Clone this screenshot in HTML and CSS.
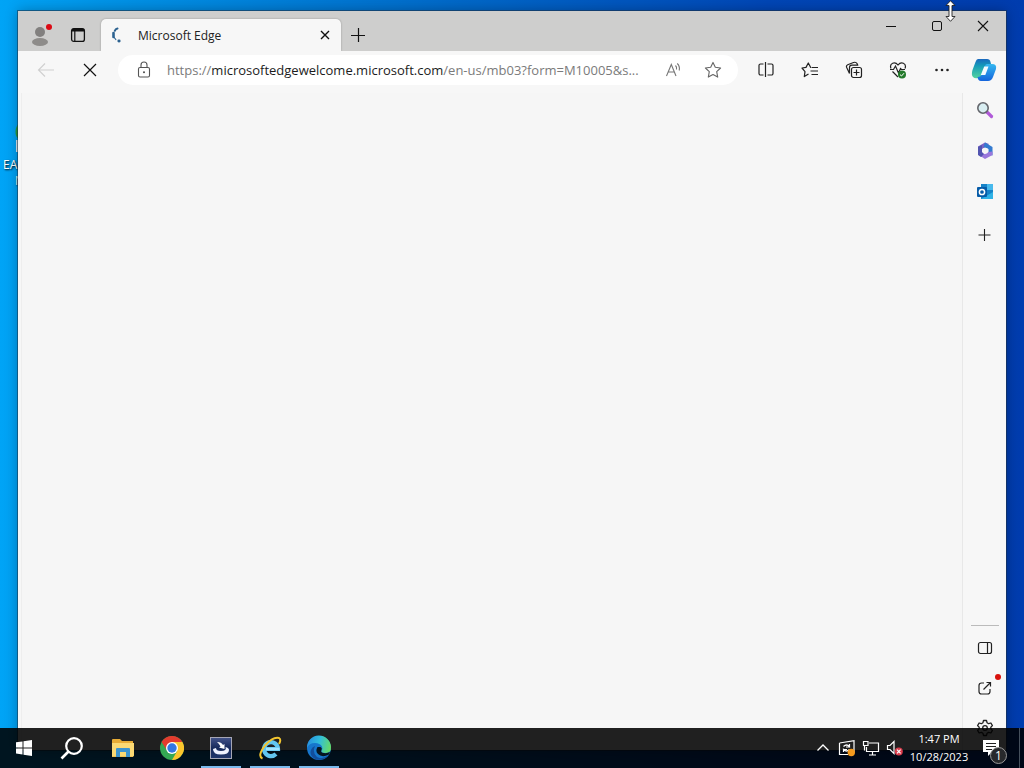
FILE: index.html
```html
<!DOCTYPE html>
<html lang="en">
<head>
<meta charset="utf-8">
<title>Desktop</title>
<link rel="stylesheet" href="styles.css">
</head>
<body>
<div class="desktop">
  <div class="shortcut">
    <svg width="24" height="36" viewBox="0 0 24 36"><path d="M10 3C3 6 3 18 8 20h10V3z" fill="#2a9d3c"/><path d="M5 21h14v12H5z" fill="#d8e6ee"/></svg>
    <span>EA</span>
    <span class="shortcut-second">N</span>
  </div>

  <main class="window">
    <header class="titlebar">
      <button class="title-btn profile" aria-label="Profile">
        <svg width="24" height="24" viewBox="0 0 24 24"><circle cx="11" cy="9" r="5" fill="#82807f"/><ellipse cx="11" cy="19" rx="8" ry="4" fill="#8e8c8a"/><circle cx="20" cy="4" r="3" fill="#dc0a14"/></svg>
      </button>
      <button class="title-btn" aria-label="Tab actions">
        <svg width="16" height="16" viewBox="0 0 16 16" fill="none" stroke="#111"><rect x="1.600" y="1.600" width="12.800" height="12.800" rx="2.200" stroke-width="1.300"/><path d="M2 3.200h12" stroke-width="2.600"/><path d="M4.800 3v11" stroke-width="1.200"/></svg>
      </button>
      <div class="tab">
        <svg class="tab-icon" width="16" height="16" viewBox="0 0 16 16" fill="none" stroke="#2c6290" stroke-linecap="round"><path d="M8.500 1.500Q6.500 2 5.800 3.800" stroke-width="2"/><path d="M4.500 6v4" stroke-width="2.600"/><path d="M5.200 10.500l1.600 2" stroke-width="1.200"/><path d="M9.800 14h.4" stroke-width="2.800"/></svg>
        <span class="tab-title">Microsoft Edge</span>
        <button class="tab-close" aria-label="Close tab">
          <svg width="10" height="10" viewBox="0 0 10 10" stroke="#111" stroke-width="1.400"><path d="M1 1l8 8M9 1l-8 8"/></svg>
        </button>
      </div>
      <button class="new-tab" aria-label="New tab">
        <svg width="16" height="16" viewBox="0 0 16 16" stroke="#111" stroke-width="1.200"><path d="M8.500 1v14M1 8.500h14"/></svg>
      </button>
      <div class="window-controls">
        <button aria-label="Minimize"><svg width="12" height="12" viewBox="0 0 12 12" stroke="#111"><path d="M1 6.500h10"/></svg></button>
        <button aria-label="Maximize"><svg width="12" height="12" viewBox="0 0 12 12" fill="none" stroke="#111"><rect x="1.500" y="1.500" width="9" height="9" rx="1.500"/></svg></button>
        <button aria-label="Close"><svg width="12" height="12" viewBox="0 0 12 12" stroke="#111" stroke-width="1.100"><path d="M1 1l10 10M11 1L1 11"/></svg></button>
      </div>
    </header>

    <nav class="toolbar">
      <button class="tool" aria-label="Back" disabled>
        <svg width="18" height="18" viewBox="0 0 18 18" fill="none" stroke="#cfcfcf" stroke-width="1.100"><path d="M17 9H1.500M8 2.500L1.500 9 8 15.500"/></svg>
      </button>
      <button class="tool" aria-label="Stop loading">
        <svg width="14" height="14" viewBox="0 0 14 14" stroke="#111" stroke-width="1.200"><path d="M1 1l12 12M13 1L1 13"/></svg>
      </button>
      <div class="address">
        <button class="address-btn" aria-label="Site information">
          <svg width="16" height="18" viewBox="0 0 16 18" fill="none" stroke="#555" stroke-width="1.100"><rect x="2.500" y="6.500" width="11" height="9.500" rx="1.500"/><path d="M5 6.500V4a3 3 0 0 1 6 0v2.500"/><circle cx="8" cy="11.300" r=".5" fill="#555"/></svg>
        </button>
        <label class="url">
          <input class="url-input" type="text" aria-label="Address and search bar">
          <span class="url-text">https://<b>microsoftedgewelcome.microsoft.com</b>/en-us/mb03?form=M10005&amp;s...</span>
        </label>
        <button class="address-btn" aria-label="Read aloud">
          <svg width="18" height="18" viewBox="0 0 18 18" fill="none" stroke="#777" stroke-width="1.100"><path d="M2.500 15L7.300 3.500 12 15M4.200 11h6.200M11.500 4.500q1.500 1.600 1 4M13.200 2.500q3 2.800 2 7"/></svg>
        </button>
        <button class="address-btn" aria-label="Add to favorites">
          <svg width="18" height="18" viewBox="0 0 18 18" fill="none" stroke="#666" stroke-width="1.100" stroke-linejoin="round"><path d="M9 1.400l2.300 4.900 5.300.7-3.900 3.700 1 5.400L9 13.500l-4.700 2.600 1-5.400L1.400 7l5.300-.7z"/></svg>
        </button>
      </div>
      <div class="tools">
        <button class="tool" aria-label="Split screen">
          <svg width="18" height="18" viewBox="0 0 18 18" fill="none" stroke="#222" stroke-width="1.200"><path d="M6.500 3h-3a1.500 1.500 0 0 0-1.500 1.500v8a1.500 1.500 0 0 0 1.500 1.500h3M10.500 3h4a1.500 1.500 0 0 1 1.500 1.500v8a1.500 1.500 0 0 1-1.500 1.500h-4M8.500 1v15"/></svg>
        </button>
        <button class="tool" aria-label="Favorites">
          <svg width="18" height="18" viewBox="0 0 18 18" fill="none" stroke="#222" stroke-width="1.200" stroke-linejoin="round"><path d="M10.500 6.500H9.700L7.300 2 5 6.400l-4 .6 3 3.600-.7 5L7.500 13M11 6.500h6M9.500 10h7.500M10.500 13.500h6.500"/></svg>
        </button>
        <button class="tool" aria-label="Collections">
          <svg width="18" height="18" viewBox="0 0 18 18" fill="none" stroke="#222" stroke-width="1.200"><rect x="6.500" y="6.500" width="10" height="10" rx="2"/><path d="M11.500 8.500v6M8.500 11.500h6M4.500 12.500L1.700 6.500q-.8-2 1-2.800L8.500 1.500Q11 .7 12 2.500l.8 1.500M4.500 12.500V6.500q0-2.300 2.300-2.300h6.500"/></svg>
        </button>
        <button class="tool" aria-label="Browser essentials">
          <svg width="18" height="18" viewBox="0 0 18 18" fill="none" stroke="#222" stroke-width="1.200"><path d="M2 7.500C0 2 6 0 9 4c3-4 9-2 7 3.500M3.500 10.500L9 16M1 8.500h3.500L6.500 5l3 7 2-4.500 1 1H16"/><circle cx="13" cy="13.500" r="4" fill="#237a2b" stroke="none"/><path d="M11 13.600l1.500 1.400 2.500-2.800" stroke="#fff" stroke-width="1"/></svg>
        </button>
        <button class="tool" aria-label="Settings and more">
          <svg width="16" height="16" viewBox="0 0 16 16" fill="#222"><circle cx="2.500" cy="8" r="1.300"/><circle cx="8" cy="8" r="1.300"/><circle cx="13.500" cy="8" r="1.300"/></svg>
        </button>
      </div>
      <button class="tool copilot" aria-label="Copilot">
        <svg width="26" height="26" viewBox="0 0 26 26"><defs><linearGradient id="cp1" x1="0" y1="0" x2="0" y2="1"><stop offset="0" stop-color="#1a68be"/><stop offset=".35" stop-color="#159bb8"/><stop offset="1" stop-color="#55d4a0"/></linearGradient><linearGradient id="cp2" x1="0" y1="0" x2="0" y2="1"><stop offset="0" stop-color="#35b8f0"/><stop offset="1" stop-color="#1464dc"/></linearGradient></defs><path d="M7 2h9q3 0 3.500 3l.5 2q-4 0-5.500 3.500L11 18q-1 3-4 3-3 1-5-1Q0 18 1.500 13L4.500 5Q5.500 2 7 2z" fill="url(#cp1)"/><path d="M16 7h5q5 0 4 5l-3 8q-1.500 4-5 4H10q-3 0-3.500-4 3.500 0 4.500-3l3-8q.5-2 2-2z" fill="url(#cp2)"/><path d="M13.200 9.500h4.300l-3.200 8.500H9.800z" fill="#f4fbff"/></svg>
      </button>
    </nav>

    <div class="content">
      <section class="page" aria-label="Page content"></section>
      <aside class="sidebar">
        <button class="side-btn" aria-label="Search">
          <svg width="18" height="18" viewBox="0 0 18 18"><path d="M11 11l4.500 4.500" stroke="#b05ad8" stroke-width="3.200" stroke-linecap="round"/><circle cx="7" cy="7" r="5.200" fill="#d9eef2" stroke="#64666c" stroke-width="1.600"/></svg>
        </button>
        <button class="side-btn" aria-label="Microsoft 365">
          <svg width="18" height="18" viewBox="0 0 18 18"><path d="M9 .5L2 4.500v8L6 15l2-3-2-2V7l4-2 3-3z" fill="#7b62c6"/><path d="M9 .5L16.500 5v8.500l-4-1V7L7.500 5z" fill="#347bd0"/><path d="M2 12.500l7 4.500 7.500-4v-3.500L12 10l-3 2-4-1z" fill="#9a78dc"/><path d="M2 5l4-2v7l2 2-3 3-3-2z" fill="#5355b0"/><circle cx="9.200" cy="8.700" r="3" fill="#f7f7f7"/></svg>
        </button>
        <button class="side-btn" aria-label="Outlook">
          <svg width="18" height="18" viewBox="0 0 18 18"><path d="M5 1h12v15H5z" fill="#1683c8"/><path d="M11 1h6v6h-6z" fill="#48b9ec"/><path d="M5 16l12-7v7z" fill="#2fb2e6"/><rect x="1" y="4" width="10" height="10" rx="1" fill="#075ca8"/><circle cx="6" cy="9" r="2.600" fill="none" stroke="#fff" stroke-width="1.500"/></svg>
        </button>
        <button class="side-btn side-add" aria-label="Customize">
          <svg width="14" height="14" viewBox="0 0 14 14" stroke="#222" stroke-width="1.100"><path d="M6.500 1v12M.5 7h12"/></svg>
        </button>
        <div class="side-bottom">
          <button class="side-btn" aria-label="Hide sidebar">
            <svg width="18" height="18" viewBox="0 0 18 18" fill="none" stroke="#222" stroke-width="1.200"><rect x="2.500" y="3.500" width="13" height="11" rx="2"/><path d="M11.500 3.500v11"/></svg>
          </button>
          <button class="side-btn" aria-label="Open in new window">
            <svg width="18" height="18" viewBox="0 0 18 18" fill="none" stroke="#222" stroke-width="1.200"><path d="M8 4H5.500Q3 4 3 6.500v6Q3 15 5.500 15h6q2.500 0 2.500-2.500V10M7.500 10.500L14.500 3.500M10.500 3.500h4v4"/></svg>
            <span class="side-dot"></span>
          </button>
          <button class="side-btn" aria-label="Settings">
            <svg width="18" height="18" viewBox="0 0 18 18" fill="none" stroke="#222" stroke-width="1.300" stroke-linejoin="round"><path d="M7.500 1.500h3l.6 2.300 1.500.9 2.300-.7 1.500 2.600L14.800 8.200v1.600l1.600 1.600-1.500 2.600-2.300-.7-1.500.9-.6 2.300h-3l-.6-2.300-1.500-.9-2.300.7-1.500-2.600 1.600-1.600V8.200L1.600 6.600 3.100 4l2.300.7 1.500-.9z"/><circle cx="9" cy="9" r="2.300"/></svg>
          </button>
        </div>
      </aside>
    </div>
  </main>

  <svg class="pointer" width="11" height="22" viewBox="0 0 11 22"><path d="M5.500.7L10 5.500H7v11h3l-4.500 4.800L1 16.500h3v-11H1z" fill="#fff" stroke="#222" stroke-width=".9"/></svg>

  <footer class="taskbar">
    <button class="task" aria-label="Start">
      <svg width="18" height="18" viewBox="0 0 18 18" fill="#fff"><path d="M1 3.300L7.500 2.400v6H1zM8.500 2.200L17 1v7.400H8.500zM1 9.400h6.500v6L1 14.600zM8.500 9.400H17V17l-8.500-1.300z"/></svg>
    </button>
    <button class="task" aria-label="Search">
      <svg width="24" height="24" viewBox="0 0 24 24" fill="none" stroke="#fff"><circle cx="14" cy="10" r="7.800" stroke-width="2.200"/><path d="M8.500 15.500L1.500 22.500" stroke-width="2.600"/></svg>
    </button>
    <div class="apps">
      <button class="task" aria-label="File Explorer">
        <svg width="22" height="20" viewBox="0 0 22 20"><path d="M0 2q0-1 1-1h7l2 2h11v16H0z" fill="#e8ac36"/><path d="M0 5h22v12.500q0 1-1 1H0z" fill="#fbd974"/><path d="M4 19v-8q0-1 1-1h12q1 0 1 1v8h-4v-5H8v5z" fill="#3d94cf"/></svg>
      </button>
      <button class="task" aria-label="Google Chrome">
        <svg width="24" height="24" viewBox="0 0 24 24"><circle cx="12" cy="12" r="12" fill="#34a853"/><path d="M1.600 6A12 12 0 0 1 22.400 6L17 9H12L7 14.500z" fill="#e33b2e"/><path d="M22.400 6A12 12 0 0 1 12 24l5.200-9L12 6z" fill="#fbc52d"/><circle cx="12" cy="12" r="6" fill="#fff"/><circle cx="12" cy="12" r="4.700" fill="#3377e2"/></svg>
      </button>
      <button class="task running" aria-label="Installer">
        <svg width="22" height="22" viewBox="0 0 22 22"><defs><linearGradient id="in" x1="0" y1="0" x2="0" y2="1"><stop offset="0" stop-color="#44548a"/><stop offset=".5" stop-color="#172a5c"/><stop offset="1" stop-color="#20376c"/></linearGradient></defs><rect x=".5" y=".5" width="21" height="21" fill="url(#in)" stroke="#a5a6b5"/><path d="M3 12q0 5.500 8 5.500t8-4.500q0-2-3.500-3 1.500 4-4.500 4-5 0-5-3z" fill="#eef2ff"/><path d="M7 5q4.500 0 6 3l1.500-1v5L9 10.500l1.500-1Q9.500 7 7 5z" fill="#fff"/></svg>
      </button>
      <button class="task running" aria-label="Internet Explorer">
        <svg width="24" height="24" viewBox="0 0 24 24" fill="none"><path d="M6 13h14a7 7 0 1 0-2 5" stroke="#62c6f0" stroke-width="4.200"/><path d="M8 13h13.500" stroke="#a4e5ff" stroke-width="2.500"/><path d="M4.500 22.500Q-1 20 7 9.500 15 .5 21 2q2.500 1.500 0 6" stroke="#f3c52f" stroke-width="2"/></svg>
      </button>
      <button class="task running" aria-label="Microsoft Edge">
        <svg width="26" height="26" viewBox="0 0 26 26"><defs><linearGradient id="eg" x1="0" y1=".3" x2="1" y2=".5"><stop offset="0" stop-color="#278de0"/><stop offset=".5" stop-color="#31bedb"/><stop offset="1" stop-color="#65da69"/></linearGradient></defs><circle cx="13" cy="13" r="12" fill="#1676cc"/><path d="M1 13A12 12 0 0 1 25 12q.5 6-6 6-4 0-3.500-2.500Q17 14 16 11.500 14 8 9 8 3 8 1 13z" fill="url(#eg)"/><path d="M9 11Q6 18 11 22q5 3 12-2A12 12 0 0 1 9 24Q3 20 5 15q1-3 4-4z" fill="#124e9d"/><path d="M11.500 12Q9 16 12 19q4 4 11 .5l1-2.500q-3 1.500-6 1-4-.5-2.500-3 1-2-1-3z" fill="#06151f"/></svg>
      </button>
    </div>

    <div class="tray">
      <button class="tray-btn" aria-label="Show hidden icons">
        <svg width="14" height="14" viewBox="0 0 14 14" fill="none" stroke="#fff" stroke-width="1.300"><path d="M1.500 9.500L7 4l5.500 5.500"/></svg>
      </button>
      <button class="tray-btn" aria-label="Windows Update">
        <svg width="18" height="18" viewBox="0 0 18 18" fill="none" stroke="#fff" stroke-width="1.200"><path d="M1.500 4L16 1.700V13M1.500 4v11.500H10M5.500 7.500q3-3 6 0V5M11.500 10.500q-3 3-6 0V13M8 8h3.500M5.500 10.500H9"/><circle cx="13.300" cy="13.500" r="3.700" fill="#f49a1d" stroke="none"/></svg>
      </button>
      <button class="tray-btn" aria-label="Network">
        <svg width="18" height="18" viewBox="0 0 18 18" fill="none" stroke="#fff" stroke-width="1.200"><path d="M7 4h9.500v8.500h-12V8M10.500 12.500V16M7 16h7M1.500 2.500h4.500v4H1.500zM2.500 6.500v5"/></svg>
      </button>
      <button class="tray-btn" aria-label="Volume muted">
        <svg width="18" height="18" viewBox="0 0 18 18" fill="none" stroke="#fff" stroke-width="1.200"><path d="M1.500 6.500h2.500L8 2.500v12l-4-4H1.500z"/><circle cx="12.800" cy="12.500" r="4" fill="#d93c4c" stroke="none"/><path d="M11 10.700l3.600 3.600M14.600 10.700L11 14.300"/></svg>
      </button>
      <button class="clock"><time>1:47 PM</time><time>10/28/2023</time></button>
      <button class="notifications" aria-label="Notifications">
        <svg width="18" height="18" viewBox="0 0 18 18"><path d="M1 1h16v12H10l-4 4v-4H1z" fill="#fff"/><path d="M4 4.500h10M4 7.500h10M4 10.500h6" stroke="#222"/></svg>
        <span class="badge">1</span>
      </button>
      <button class="show-desktop" aria-label="Show desktop"></button>
    </div>
  </footer>
</div>
</body>
</html>
```
FILE: styles.css
```css
* { box-sizing: border-box; }
body { margin: 0; font-family: "Open Sans", "Noto Sans", sans-serif; font-size: 12px; }
button { display: flex; align-items: center; justify-content: center; padding: 0; border: 0; background: none; color: inherit; font: inherit; flex: none; }
svg { display: block; flex: none; }

.desktop {
  position: relative;
  height: 100vh;
  overflow: hidden;
  background: linear-gradient(90deg, #00a4f6 0%, #0094e8 10%, #0068c8 45%, #0046b6 75%, #003cae 100%);
}

.shortcut { position: absolute; left: 3px; top: 119px; display: flex; flex-direction: column; color: #fff; line-height: 16px; text-shadow: 1px 1px 2px #000; }
.shortcut svg { margin: 0 0 2px 8px; }
.shortcut-second { padding-left: 12px; }

.window {
  position: absolute;
  inset: 11px 18px 18px;
  display: flex;
  flex-direction: column;
  background: #f7f7f7;
  box-shadow: 0 0 0 1px rgba(30, 50, 70, .55), 0 0 12px rgba(0, 0, 0, .3);
}

.titlebar { display: flex; align-items: flex-end; height: 40px; padding-left: 4px; background: #cececd; }
.title-btn { width: 37px; height: 32px; }
.tab { display: flex; align-items: center; gap: 13px; width: 240px; height: 32px; margin-left: 5px; padding: 0 8px; border-radius: 5px 5px 0 0; background: #f7f7f7; box-shadow: 0 0 2px rgba(0, 0, 0, .3); clip-path: inset(-3px -3px 0); }
.tab-title { flex: 1; color: #222; }
.tab-close { width: 16px; height: 16px; }
.new-tab { width: 34px; height: 32px; }
.window-controls { display: flex; align-self: flex-start; margin-left: auto; }
.window-controls button { width: 46px; height: 30px; }

.toolbar { display: flex; align-items: center; height: 38px; padding-left: 6px; background: #f7f7f7; }
.tool { width: 44px; height: 32px; }
.address { display: flex; flex: 1; align-items: center; min-width: 0; height: 30px; margin: 0 6px; padding: 0 5px 0 6px; border-radius: 15px; background: #fff; }
.address-btn { width: 40px; height: 30px; }
.url { position: relative; display: block; flex: 1; min-width: 0; margin-left: 3px; line-height: 30px; }
.url-input { position: absolute; inset: 0; width: 100%; border: 0; outline: 0; background: transparent; font: inherit; }
.url-text { position: relative; display: block; color: #7b7b7b; font-size: 13px; white-space: nowrap; pointer-events: none; }
.url-text b { color: #1c1c1c; font-weight: 400; }
.tools { display: flex; }
.copilot { margin-left: -2px; }

.content { display: flex; flex: 1; min-height: 0; }
.page { flex: 1; margin: 4px 0 0 3px; border-left: 1px solid #eee; border-right: 1px solid #e8e8e8; background: #f6f6f6; }
.sidebar { display: flex; flex-direction: column; align-items: center; gap: 1px; width: 43px; padding: 1px 0 2px; }
.side-btn { position: relative; width: 40px; height: 40px; }
.side-add { margin-top: 2px; }
.side-bottom { display: flex; flex-direction: column; align-items: center; margin-top: auto; }
.side-bottom::before { content: ""; width: 28px; height: 1px; margin-bottom: 2px; background: #bbb; }
.side-dot { position: absolute; top: 6px; right: 4px; width: 6px; height: 6px; border-radius: 50%; background: #d8120c; }

.pointer { position: absolute; top: 0; right: 68px; }

.taskbar { position: absolute; inset: auto 0 0; display: flex; height: 40px; background: rgba(0, 0, 0, .87); color: #fff; }
.task { width: 48px; height: 40px; }
.apps { display: flex; gap: 1px; margin-left: 3px; }
.running { position: relative; }
.running::after { content: ""; position: absolute; inset: auto 4px 0; height: 2px; background: #79b9ed; }
.tray { display: flex; align-items: stretch; margin-left: auto; }
.tray-btn { width: 24px; }
.clock { flex-direction: column; width: 64px; font-size: 11px; line-height: 18px; }
.notifications { position: relative; width: 40px; margin-right: 8px; }
.badge { position: absolute; right: 4px; bottom: 4px; width: 17px; height: 17px; border: 1px solid #999; border-radius: 50%; background: #28292c; font-size: 12px; line-height: 15px; text-align: center; }
.show-desktop { width: 5px; border-left: 1px solid #46505c; }
```
